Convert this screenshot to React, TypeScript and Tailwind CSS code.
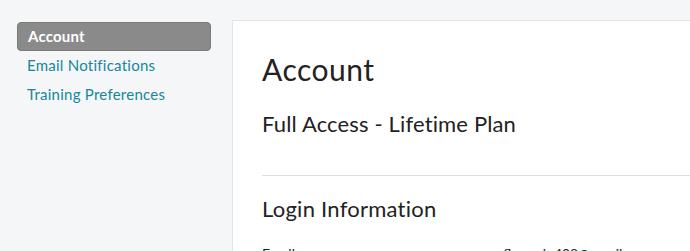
const NAV = [
  { label: 'Account', active: true },
  { label: 'Email Notifications', active: false },
  { label: 'Training Preferences', active: false },
]

export default function App() {
  return (
    <div className="flex h-[251px] w-full overflow-hidden bg-[#f5f6f8] font-['Lato',sans-serif]">
      {/* Sidebar */}
      <nav className="flex w-[232px] shrink-0 flex-col pt-[22px] pr-[21px] pl-[17px]">
        {NAV.map((item) =>
          item.active ? (
            <div
              key={item.label}
              className="h-[29px] rounded-[4px] border border-[#7a7a7a] bg-[#8a8a8a] pl-[10px] text-[15px] leading-[27px] font-bold tracking-[0.2px] text-white"
            >
              {item.label}
            </div>
          ) : (
            <a
              key={item.label}
              className="h-[29px] pl-[10px] text-[15px] leading-[29px] tracking-[0.25px] text-[#16879a]"
            >
              {item.label}
            </a>
          ),
        )}
      </nav>

      {/* Content card */}
      <main className="mt-[20px] flex-1 border-t border-l border-[#e2e4e7] bg-white pt-[30px] pl-[29px] text-[#222]">
        <h1 className="text-[30px] leading-[36px] tracking-[0.5px]">Account</h1>
        <p className="mt-[24px] text-[22px] leading-[26px] tracking-[0.15px]">Full Access - Lifetime Plan</p>
        <div className="mt-[38px] h-px bg-[#dedede]" />
        <h2 className="mt-[19px] text-[22px] leading-[28px] tracking-[0.25px]">Login Information</h2>
        <div className="mt-[22px] flex text-[14px] leading-[18px]">
          <span className="w-[235px]">Email</span>
          <span>sfhussain408@gmail.com</span>
        </div>
      </main>
    </div>
  )
}
